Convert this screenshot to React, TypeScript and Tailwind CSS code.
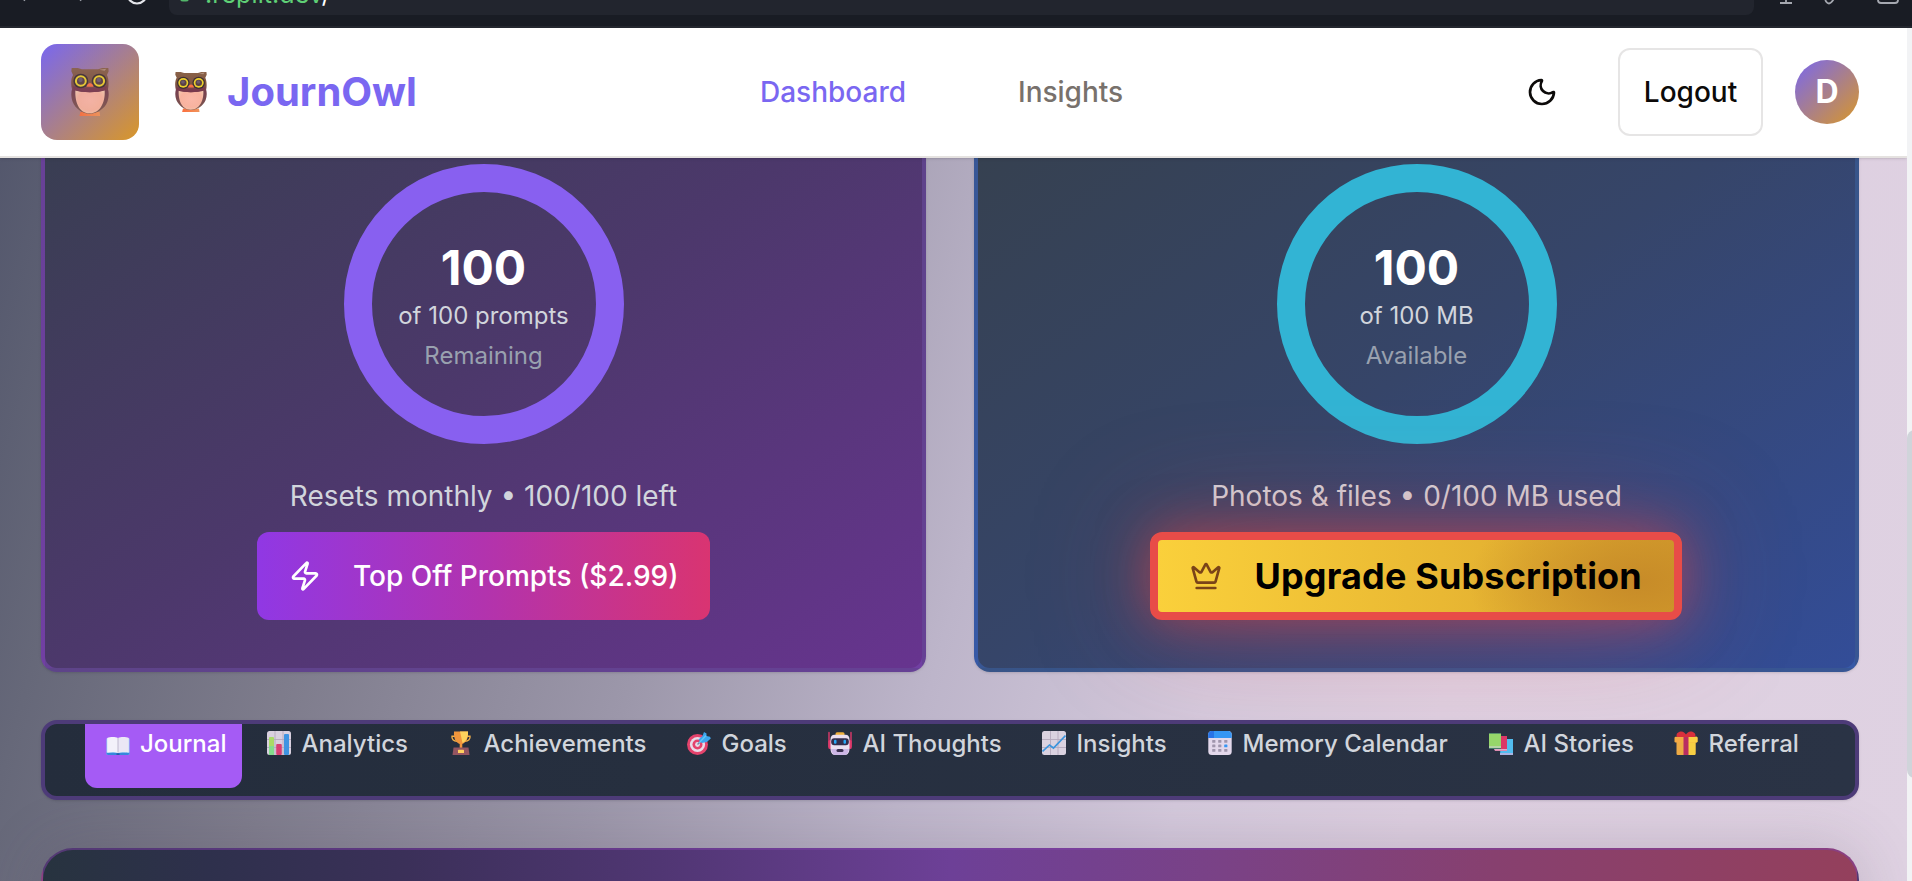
import React from "react";
import { Crown, Moon, Zap } from "lucide-react";

function Owl({ className, id }: { className: string; id: string }) {
  return (
    <svg viewBox="0 0 112 144" className={className} preserveAspectRatio="none">
      <defs>
        <linearGradient id={id + "b"} x1="0" x2="0" y1="0" y2="1">
          <stop offset="0" stopColor="#8a6248" />
          <stop offset="0.3" stopColor="#7f5541" />
          <stop offset="0.5" stopColor="#76404f" />
          <stop offset="1" stopColor="#7d5a50" />
        </linearGradient>
        <radialGradient id={id + "c"} cx="0.5" cy="0.45" r="0.65">
          <stop offset="0" stopColor="#fbb8a8" />
          <stop offset="0.65" stopColor="#f8b39f" />
          <stop offset="1" stopColor="#f3cdb0" />
        </radialGradient>
        <linearGradient id={id + "f"} x1="0" x2="1">
          <stop offset="0" stopColor="#fb6f3e" />
          <stop offset="1" stopColor="#f0955c" />
        </linearGradient>
      </defs>
      <path d="M28 131h56l2 13H25z" fill={`url(#${id}f)`} />
      <path d="M2 0h18l12 4h48L92 0h18l1 10-5 11c5 10 6 28 3 43 3 10 3 24-2 38-8 20-29 35-52 35S14 122 5 102c-5-14-5-28-2-38C-1 48 0 31 6 21L1 10z" fill={`url(#${id}b)`} />
      <path d="M13 66c18 9 66 9 86 0 3 31-10 70-44 70S11 97 13 66z" fill={`url(#${id}c)`} />
      <path d="M5 54c14 8 86 8 101 0l-4 13c-22 8-70 8-93 0z" fill="#78394d" />
      {[29, 83].map((x) => (
        <g key={x}>
          <circle cx={x} cy="39" r="22" fill="#3e2f33" />
          <circle cx={x} cy="39" r="17.500" fill="#ecd02c" />
          <circle cx={x} cy="39" r="11.500" fill="#594043" />
          <circle cx={x - 1} cy="36" r="6.500" fill="#6c5a6c" />
        </g>
      ))}
      <path d="M56 45c5 0 10 7 10 11H46c0-4 5-11 10-11z" fill="#fa7044" />
      <path d="M84 5l20-3-5 6z" fill="#c3a593" opacity="0.7" />
    </svg>
  );
}

function BookIcon() {
  return (
    <svg viewBox="0 0 24 24" className="size-6">
      <path d="M.5 7.500h23V22.500c0 .8-.6 1.500-1.500 1.500H2c-.9 0-1.500-.7-1.500-1.500z" fill="#8fd4f5" />
      <path d="M.5 21.500H23.500V22.800c0 .7-.6 1.200-1.500 1.200H2c-.9 0-1.500-.5-1.500-1.200z" fill="#3787dc" />
      <path d="M1.200 7C4 5.700 9 5.500 12 7v15c-3-1-8-.9-10.800-.2z" fill="#f3f1fa" />
      <path d="M22.800 7C20 5.700 15 5.500 12 7v15c3-1 8-.9 10.800-.2z" fill="#ebe7f5" />
      <path d="M12 7v14.500" stroke="#b9b2ca" strokeWidth="0.9" />
      <path d="M10.500 23.200h3" stroke="#1f4f99" strokeWidth="1.300" />
    </svg>
  );
}

function BarsIcon() {
  return (
    <svg viewBox="0 0 24 24" className="size-6">
      <rect width="24" height="24" rx="2.500" fill="#d9d0df" />
      <path d="M0 8.500h24M0 16.500h24M8 0v24M16 0v24" stroke="#b5a9bd" strokeWidth="0.9" />
      <rect x="2" y="6" width="5" height="18" rx="1" fill="#a9db66" />
      <path d="M2 15h5v9H2z" fill="#84dc8c" />
      <rect x="9.200" y="13" width="5.600" height="11" rx="1" fill="#d83f73" />
      <rect x="17" y="3" width="5" height="21" rx="1" fill="#3f94e2" />
    </svg>
  );
}

function TrophyIcon() {
  return (
    <svg viewBox="0 0 24 24" className="size-6">
      <path d="M6.500 5.300H3c-.5 2.500 1.500 4.800 5 5M17.500 5.300H21c.5 2.500-1.500 4.800-5 5" fill="none" stroke="#f0b04a" strokeWidth="1.400" />
      <path d="M5 .5h14c.4 6.500-1.500 11-5.700 12.500V17h-2.600v-4C6.500 11.500 4.600 7 5 .5z" fill="#f0953c" />
      <path d="M11 .5h8c.3 5.500-1.500 9.500-5.500 11.500z" fill="#fdd35c" />
      <path d="M4.500 16.500h15l1 7.500h-17z" fill="#945560" />
      <rect x="9" y="18.800" width="6" height="3.200" rx="0.6" fill="#ffcf5e" />
    </svg>
  );
}

function TargetIcon() {
  return (
    <svg viewBox="0 0 24 24" className="size-6">
      <circle cx="10.500" cy="13.500" r="10.500" fill="#e4436c" />
      <circle cx="10.500" cy="13.500" r="7.600" fill="#e8dce8" />
      <circle cx="10.500" cy="13.500" r="5" fill="#e4436c" />
      <circle cx="10.500" cy="13.500" r="2.400" fill="#e8dce8" />
      <path d="M10.500 13.500l6-6" stroke="#7789a6" strokeWidth="1.500" />
      <path d="M11.500 8.500l4-3.500L17 1l2.500 1.500V5l3.500.8.8 1.700-4 3.500-5 1z" fill="#3da6ee" />
      <path d="M12 12l7-7.500" stroke="#63c8f7" strokeWidth="1.200" />
    </svg>
  );
}

function RobotIcon() {
  return (
    <svg viewBox="0 0 24 24" className="size-6">
      <path d="M1 1.500v14M23 1.500v14" stroke="#e0396b" strokeWidth="1.400" strokeLinecap="round" />
      <rect x="0.3" y="9" width="3" height="9" rx="1.500" fill="#e0396b" />
      <rect x="20.700" y="9" width="3" height="9" rx="1.500" fill="#e0396b" />
      <rect x="7.500" y="1.300" width="9" height="4" rx="1.500" fill="#eeb03c" />
      <path d="M6.500 3.800h11c2.600 0 4 2 4 4.500v9c0 4-1.500 6.700-4.500 6.700H7c-3 0-4.500-2.700-4.500-6.700v-9c0-2.500 1.400-4.500 4-4.500z" fill="#eadff0" />
      <path d="M3 18c1 4 2 6 4 6h10c2 0 3-2 4-6z" fill="#cdb7e6" />
      <rect x="3.200" y="7.200" width="17.600" height="7" rx="3" fill="#332e4d" />
      <rect x="6" y="8.700" width="2.500" height="4" rx="1" fill="#29a8f5" />
      <rect x="15.500" y="8.700" width="2.500" height="4" rx="1" fill="#29a8f5" />
      <rect x="8.500" y="18" width="7" height="3" rx="1.500" fill="#3b3150" />
    </svg>
  );
}

function TrendIcon() {
  return (
    <svg viewBox="0 0 24 24" className="size-6">
      <rect width="24" height="24" rx="2.500" fill="#dad2e0" />
      <path d="M0 8.500h24M0 16.500h24M8.500 0v24M16 0v24" stroke="#b5a9bd" strokeWidth="0.9" />
      <path d="M.5 20.500L7.500 14l4 3L23.500 4.500" fill="none" stroke="#3c94dc" strokeWidth="1.700" />
    </svg>
  );
}

function CalendarIcon() {
  const rows = [10, 14.500, 19];
  const cols = [6, 12, 18];
  return (
    <svg viewBox="0 0 24 24" className="size-6">
      <rect x="0.3" width="23.400" height="24" rx="3.500" fill="#e3d8eb" />
      <path d="M.3 7V3.500C.3 1.500 1.800 0 3.800 0h16.400c2 0 3.500 1.500 3.500 3.500V7z" fill="#3696f4" />
      <path d="M.3 7V3.500C.3 1.500 1.800 0 3.800 0H6v7z" fill="#2a73e6" />
      {rows.map((y) =>
        cols.map((x) => (
          <rect key={x + "-" + y} x={x - 1.800} y={y - 1} width="3.200" height="2.800" rx="0.6" fill={x === 18 && y === 14.500 ? "#3696f4" : "#a096ad"} />
        ))
      )}
    </svg>
  );
}

function BooksIcon() {
  return (
    <svg viewBox="0 0 24 24" className="size-6">
      <path d="M12 8h12v16H11z" fill="#52bdf0" />
      <path d="M11 22h13v2H11z" fill="#a9b4e2" />
      <path d="M10 5h8v15H6l-1-4z" fill="#dc3767" />
      <path d="M5 18h13v1.800H6z" fill="#dfa9c9" />
      <path d="M0 2h12v15.500H0z" fill="#96d66a" />
      <path d="M0 15.500h12v1H0z" fill="#d3cfe3" />
      <path d="M0 17h12v.9H0zM0 2h12v.8H0z" fill="#447a68" />
    </svg>
  );
}

function GiftIcon() {
  return (
    <svg viewBox="0 0 24 24" className="size-6">
      <rect x="2.500" y="8" width="19" height="16" rx="1.200" fill="#edaa45" />
      <path d="M14 8h7.500v14.800c0 .7-.5 1.200-1.200 1.200H14z" fill="#f7cf43" />
      <rect x="0.5" y="5.800" width="23" height="5.700" rx="1.200" fill="#f4a944" />
      <path d="M14 5.800h8.300c.7 0 1.200.5 1.200 1.200v3.300c0 .7-.5 1.200-1.200 1.200H14z" fill="#fbd045" />
      <path d="M9.500 5h5v19h-5z" fill="#b92d62" />
      <path d="M12 6H3C1.500 3 4 1 6.500.5 9 0 11 2 12 3.500 13 2 15 0 17.500.5 20 1 22.500 3 21 6z" fill="#d9303c" />
    </svg>
  );
}

const tabs = [
  { label: "Analytics", icon: <BarsIcon />, width: "w-[182px]" },
  { label: "Achievements", icon: <TrophyIcon />, width: "w-[238px]" },
  { label: "Goals", icon: <TargetIcon />, width: "w-[141px]" },
  { label: "AI Thoughts", icon: <RobotIcon />, width: "w-[214px]" },
  { label: "Insights", icon: <TrendIcon />, width: "w-[166px]" },
  { label: "Memory Calendar", icon: <CalendarIcon />, width: "w-[281px]" },
  { label: "AI Stories", icon: <BooksIcon />, width: "w-[185px]" },
  { label: "Referral", icon: <GiftIcon />, width: "w-[130px]" },
];

function Ring({ color, total, caption }: { color: string; total: string; caption: string }) {
  return (
    <div className={"flex size-[280px] flex-col items-center rounded-full border-[28px] pt-[48px] " + color}>
      <div className="text-[48px] leading-[56px] font-bold text-white">100</div>
      <div className="text-[24px] leading-[40px] whitespace-nowrap text-gray-300">{total}</div>
      <div className="text-[24px] leading-[40px] text-gray-400">{caption}</div>
    </div>
  );
}

function BrowserBar() {
  return (
    <div className="flex h-7 w-full shrink-0 items-start overflow-hidden border-b-2 border-[#24272f] bg-[#191c24]">
      <svg className="h-6 w-[169px]" viewBox="0 0 169 24" fill="none">
        <path d="M22 -3l3 3.500M80 .5l3-3.500" stroke="#a5a8b0" strokeWidth="2" />
        <circle cx="137" cy="-6" r="9.500" stroke="#e4e5ea" strokeWidth="2.200" />
      </svg>
      <div className="flex h-[15px] w-[1585px] overflow-hidden rounded-b-lg bg-[#22252e] pl-[11px]">
        <svg className="h-4 w-[25px]" viewBox="0 0 25 16">
          <rect x="0" y="-12" width="9" height="13.500" rx="3" fill="#53b66a" />
        </svg>
        <div className="-mt-[20px] text-[25px] leading-[28px] tracking-[0.1px] text-[#5fd076]">
          .replit.dev<span className="text-white">/</span>
        </div>
      </div>
      <svg className="h-6 w-[158px]" viewBox="0 0 158 24" fill="none" stroke="#a5a8b0" strokeWidth="1.800">
        <path d="M26 3h12M32 -4v7" />
        <path d="M71 -3c0 4 2 6.500 4 6.500s4-3 6-6.500" />
        <rect x="124" y="-14" width="20" height="17" rx="3" />
      </svg>
    </div>
  );
}

export default function App() {
  return (
    <div className="flex h-[881px] w-[1912px] flex-col overflow-hidden font-['Inter',sans-serif]">
      <BrowserBar />
      <div className="flex min-h-0 flex-1">
        <div className="flex w-[1907px] flex-col overflow-hidden bg-[linear-gradient(106deg,#50546a_0%,#666879_10%,#7e7c8c_22%,#9c97aa_38%,#bdb5ca_52%,#d4c9dc_65%,#ddcfe0_76%,#dfd2e2_100%)]">
          <header className="relative z-10 flex h-[130px] shrink-0 items-center border-b-2 border-[#e5e2e0] bg-white pl-[41px] shadow-sm">
            <div className="flex h-24 w-[98px] items-center justify-center rounded-2xl bg-linear-to-br/srgb from-[#7867f0] to-[#d99728]">
              <Owl id="o1" className="h-12 w-[38px] opacity-90" />
            </div>
            <Owl id="o2" className="ml-9 h-10 w-8" />
            <div className="ml-[20px] w-[533px] text-[40px] leading-[48px] font-bold text-[#7a67f1]">JournOwl</div>
            <nav className="flex w-[766px] text-[28px] leading-[40px] font-medium">
              <span className="w-[258px] text-[#7a67f1]">Dashboard</span>
              <span className="text-[#78716c]">Insights</span>
            </nav>
            <Moon className="size-8 shrink-0 text-[#0c0a09]" strokeWidth={2} />
            <button className="ml-[60px] flex h-[88px] w-[145px] shrink-0 items-center justify-center rounded-xl border-2 border-[#e6e5e5] text-[28px] font-medium text-[#0c0a09]">
              Logout
            </button>
            <div className="ml-8 flex size-16 shrink-0 items-center justify-center rounded-full bg-linear-to-br/srgb from-[#7867f0] to-[#d99728] text-[32px] font-bold text-white">
              D
            </div>
          </header>

          <main className="flex flex-col pr-12 pl-[41px]">
            <div className="-mt-[98px] flex gap-12">
              <section className="flex h-[612px] w-[885px] flex-col items-center rounded-2xl border-4 border-[#7848b0]/60 bg-linear-to-br/srgb from-[#363f4e] via-[#4c386b] to-[#67348f] pt-[100px] shadow-sm">
                <Ring color="border-[#8860f0]" total="of 100 prompts" caption="Remaining" />
                <p className="mt-8 text-[28px] leading-[40px] text-gray-300">Resets monthly • 100/100 left</p>
                <button className="mt-4 flex h-[88px] w-[453px] items-center gap-8 rounded-xl bg-linear-to-r/srgb from-[#9038e4] via-[#b233ae] to-[#d93471] pl-8 text-[28px] font-medium whitespace-nowrap text-white">
                  <Zap className="size-8" />
                  Top Off Prompts ($2.99)
                </button>
              </section>
              <section className="flex h-[612px] w-[885px] flex-col items-center rounded-2xl border-4 border-[#3a62b0]/60 bg-linear-to-br/srgb from-[#36404c] via-[#364569] to-[#334d98] pt-[100px] shadow-sm">
                <Ring color="border-[#32b4d4]" total="of 100 MB" caption="Available" />
                <p className="mt-8 text-[28px] leading-[40px] text-gray-300">Photos &amp; files • 0/100 MB used</p>
                <button className="relative mt-4 mr-[2px] flex h-[88px] w-[532px] items-center rounded-xl border-8 border-[#e84c48] bg-[radial-gradient(ellipse_170px_90px_at_93%_58%,#c78b28_0%,#c78b2800_100%),linear-gradient(to_right,#fad03b,#e9b833_55%,#d6a02d)] pl-8 text-[36px] font-bold tracking-[0.15px] whitespace-nowrap text-black shadow-[0_0_120px_rgba(239,68,68,0.35),0_0_50px_rgba(239,68,68,0.5)]">
                  <Crown className="size-8 shrink-0 text-[#7a4318]" />
                  <span className="ml-[33px]">Upgrade Subscription</span>
                </button>
              </section>
            </div>

            <div className="relative mt-12 flex h-20 shrink-0 overflow-hidden rounded-2xl border-4 border-[#4d3b78] bg-linear-to-r from-[#242d3c] to-[#2a3345] pl-10 text-[24px] leading-[32px] font-medium whitespace-nowrap text-gray-300 shadow-sm">
              <div className="flex h-16 w-[157px] shrink-0 gap-[10px] rounded-b-xl bg-[#a55bf5] pt-[7px] pl-[21px] text-white">
                <BookIcon />
                <span className="-mt-[3px]">Journal</span>
              </div>
              <div className="flex pt-[7px] pl-[25px]">
                {tabs.map((t) => (
                  <div key={t.label} className={"flex shrink-0 gap-[10.5px] " + t.width}>
                    {t.icon}
                    <span className="-mt-[3px]">{t.label}</span>
                  </div>
                ))}
              </div>
            </div>

            <div className="mt-12 h-[200px] rounded-t-[32px] border-2 border-[#8040a8]/50 bg-[linear-gradient(to_right,#27333f_0%,#2e304c_9%,#3b3059_20%,#503673_34%,#6d4097_50%,#7a4286_65%,#87406f_80%,#94405c_100%)] shadow-[0_0_60px_rgba(80,70,90,0.22)]" />
          </main>
        </div>
        <div className="flex w-[5px] flex-col overflow-hidden bg-[#f2f3f5] pt-[402px]">
          <div className="h-[348px] w-4 rounded-[8px] bg-[#d0d4da]" />
        </div>
      </div>
    </div>
  );
}
